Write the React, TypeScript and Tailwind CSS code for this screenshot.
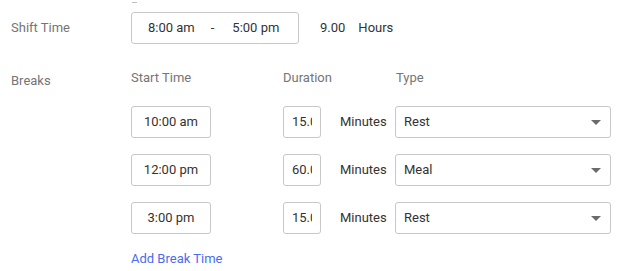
import React from "react";

const rows = [
  { start: "10:00 am", dur: "15.0", type: "Rest" },
  { start: "12:00 pm", dur: "60.0", type: "Meal" },
  { start: "3:00 pm", dur: "15.0", type: "Rest" },
];

export default function App() {
  return (
    <div
      className="w-[624px] h-[271px] bg-white text-[13px] relative overflow-hidden"
      style={{ fontFamily: "Roboto, 'Liberation Sans', sans-serif" }}
    >
      <div className="absolute left-[132px] top-[2px] w-[5px] h-px bg-[#bdbdbd]" />
      <div className="pl-[11px] pt-[12px]">
        {/* Shift time */}
        <div className="flex items-center h-[32px]">
          <div className="w-[120px] text-[#757575]">Shift Time</div>
          <div className="flex items-center w-[168px] h-[32px] border border-[#c8c8c8] rounded-[3px] text-[#333]">
            <span className="ml-[16px]">8:00 am</span>
            <span className="ml-[16px]">-</span>
            <span className="ml-[18px]">5:00 pm</span>
          </div>
          <span className="ml-[21px] text-[#333]">9.00</span>
          <span className="ml-[13px] text-[#333]">Hours</span>
        </div>
        {/* Breaks */}
        <div className="flex mt-[26px]">
          <div className="w-[120px] text-[#757575] pt-[3px] leading-[16px]">Breaks</div>
          <div className="flex flex-col">
            <div className="flex leading-[16px] text-[#757575]">
              <div className="w-[152px]">Start Time</div>
              <div className="w-[113px]">Duration</div>
              <div>Type</div>
            </div>
            <div className="flex flex-col gap-[16px] mt-[20px]">
              {rows.map((r, i) => (
                <div key={i} className="flex items-center h-[32px] text-[#333]">
                  <div className="w-[152px]">
                    <div className="w-[80px] h-[32px] border border-[#c8c8c8] rounded-[3px] flex items-center justify-center">
                      {r.start}
                    </div>
                  </div>
                  <div className="w-[38px] h-[32px] border border-[#c8c8c8] rounded-[3px] flex items-center pl-[8px] overflow-hidden whitespace-nowrap">
                    <span className="w-[20px] overflow-hidden">{r.dur}</span>
                  </div>
                  <span className="ml-[19px] w-[55px]">Minutes</span>
                  <div className="w-[216px] h-[32px] border border-[#c8c8c8] rounded-[3px] flex items-center pl-[8px] pr-[8px] justify-between">
                    <span>{r.type}</span>
                    <svg width="10" height="5" viewBox="0 0 10 5" className="mr-[1px]">
                      <path d="M0 0h10L5 5z" fill="#6b6b6b" />
                    </svg>
                  </div>
                </div>
              ))}
            </div>
            <div className="mt-[17px] text-[#4a6cf0] leading-[16px]">Add Break Time</div>
          </div>
        </div>
      </div>
    </div>
  );
}
